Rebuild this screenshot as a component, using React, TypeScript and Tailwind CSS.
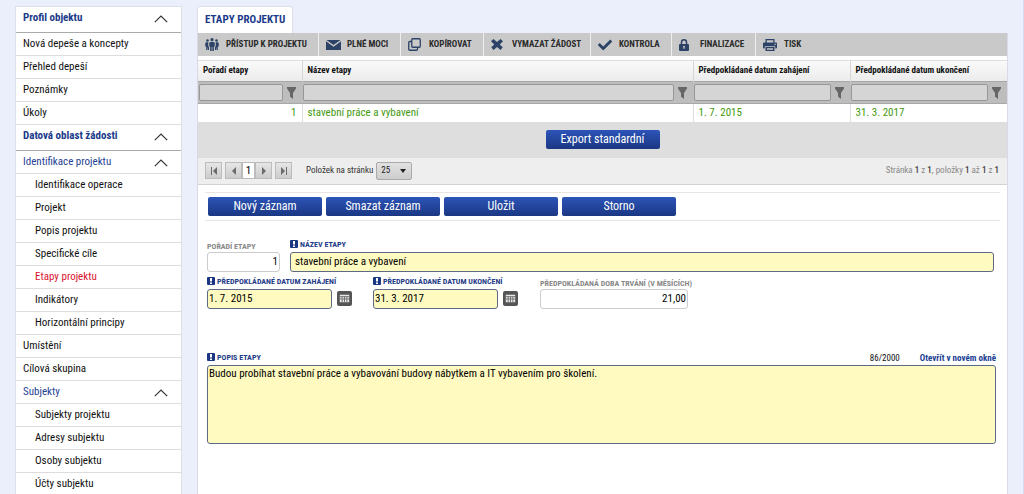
import React, { useState } from 'react';
import clsx from 'clsx';
import { FaCheck } from 'react-icons/fa';

type NavKind = 'section' | 'group' | 'item' | 'sub';

interface NavEntry {
  label: string;
  kind: NavKind;
  active?: boolean;
}

const NAV: NavEntry[] = [
  { label: 'Profil objektu', kind: 'section' },
  { label: 'Nová depeše a koncepty', kind: 'item' },
  { label: 'Přehled depeší', kind: 'item' },
  { label: 'Poznámky', kind: 'item' },
  { label: 'Úkoly', kind: 'item' },
  { label: 'Datová oblast žádosti', kind: 'section' },
  { label: 'Identifikace projektu', kind: 'group' },
  { label: 'Identifikace operace', kind: 'sub' },
  { label: 'Projekt', kind: 'sub' },
  { label: 'Popis projektu', kind: 'sub' },
  { label: 'Specifické cíle', kind: 'sub' },
  { label: 'Etapy projektu', kind: 'sub', active: true },
  { label: 'Indikátory', kind: 'sub' },
  { label: 'Horizontální principy', kind: 'sub' },
  { label: 'Umístění', kind: 'item' },
  { label: 'Cílová skupina', kind: 'item' },
  { label: 'Subjekty', kind: 'group' },
  { label: 'Subjekty projektu', kind: 'sub' },
  { label: 'Adresy subjektu', kind: 'sub' },
  { label: 'Osoby subjektu', kind: 'sub' },
  { label: 'Účty subjektu', kind: 'sub' },
];

function PeopleIcon() {
  return (
    <svg viewBox="0 0 28 26" className="h-[13px] w-[14px]" fill="currentColor">
      <circle cx="14" cy="3.4" r="3.2" />
      <circle cx="5" cy="5" r="2.6" />
      <circle cx="23" cy="5" r="2.6" />
      <path d="M10 8h8l1.500 2v7h-1.800V26h-3v-8h-1.400v8h-3v-9H8.500v-7z" />
      <path d="M2 8.500h4.500v8.500h1.500v7H5.600v-5H4.800v5H2.400v-7H.5V10z" />
      <path d="M26 8.500h-4.500v8.500H20v7h2.400v-5h.8v5h2.400v-7h1.900V10z" />
    </svg>
  );
}

function MailIcon() {
  return (
    <svg viewBox="0 0 30 20" className="h-[10px] w-[15px]" fill="currentColor">
      <path d="M1 0h28L15 10z" />
      <path d="M0 2.500 15 13.500 30 2.500V20H0z" />
    </svg>
  );
}

function CopyIcon() {
  return (
    <svg viewBox="0 0 26 26" className="h-[13px] w-[13px]" fill="none" stroke="currentColor" strokeWidth="2.6" strokeLinejoin="round">
      <rect x="7.500" y="1.500" width="17" height="17" rx="2" />
      <path d="M7.500 7H3.500a2 2 0 0 0-2 2v13.500a2 2 0 0 0 2 2H17a2 2 0 0 0 2-2v-4" />
    </svg>
  );
}

function CrossIcon() {
  return (
    <svg viewBox="0 0 24 22" className="h-[11px] w-[12px]" fill="currentColor">
      <path d="M0 4.500 5 0l7 6 7-6 5 4.500L17.500 11l6 5.500L19 22l-7-6-7 6-4.500-5.500 6-5.500z" />
    </svg>
  );
}

function LockIcon() {
  return (
    <svg viewBox="0 0 20 24" className="h-[12px] w-[10px]" fill="currentColor">
      <path d="M5 11V6.500a5 5 0 0 1 10 0V11" fill="none" stroke="currentColor" strokeWidth="3" />
      <path
        fillRule="evenodd"
        d="M2 10h16a2 2 0 0 1 2 2v10a2 2 0 0 1-2 2H2a2 2 0 0 1-2-2V12a2 2 0 0 1 2-2zm8 3.500a2 2 0 0 0-1 3.700V20h2v-2.800a2 2 0 0 0-1-3.700z"
      />
    </svg>
  );
}

function PrinterIcon() {
  return (
    <svg viewBox="0 0 28 24" className="h-[12px] w-[14px]" fill="currentColor">
      <path fillRule="evenodd" d="M5 0h18v8h-2.500V2.500h-13V8H5z" />
      <path
        fillRule="evenodd"
        d="M2 7h24a2 2 0 0 1 2 2v8a2 2 0 0 1-2 2h-1.500v-4.500h-21V19H2a2 2 0 0 1-2-2V9a2 2 0 0 1 2-2zm21 2.500V12h2.500V9.500z"
      />
      <path fillRule="evenodd" d="M5 16h18v8H5zm3 2.300v3.400h12v-3.400z" />
    </svg>
  );
}

function FunnelIcon() {
  return (
    <svg viewBox="0 0 9 12" className="h-[12px] w-[9px] shrink-0" fill="#666">
      <path d="M0 0h9v1.500L6 6v6L3 9.500V6L0 1.500z" />
    </svg>
  );
}

function CalendarIcon() {
  return (
    <svg viewBox="0 0 16 16" className="h-full w-full">
      <path d="M3 4h10v8H3z" fill="#e8e8e8" />
      <path d="M3 6h10M3 8.500h10M5.500 6v6M8 6v6M10.500 6v6" stroke="#555" strokeWidth=".8" />
    </svg>
  );
}

const TOOLS = [
  { label: 'Přístup k projektu', icon: <PeopleIcon />, width: 'w-[121px]' },
  { label: 'Plné moci', icon: <MailIcon />, width: 'w-[82px]' },
  { label: 'Kopírovat', icon: <CopyIcon />, width: 'w-[83px]' },
  { label: 'Vymazat žádost', icon: <CrossIcon />, width: 'w-[107px]' },
  { label: 'Kontrola', icon: <FaCheck className="h-[14px] w-[14px]" />, width: 'w-[81px]' },
  { label: 'Finalizace', icon: <LockIcon />, width: 'w-[84px]' },
  { label: 'Tisk', icon: <PrinterIcon />, width: 'w-[60px]' },
];

const COLUMNS = [
  { title: 'Pořadí etapy', value: '1', width: 'w-[104px]', right: true },
  { title: 'Název etapy', value: 'stavební práce a vybavení', width: '' },
  { title: 'Předpokládané datum zahájení', value: '1. 7. 2015', width: 'w-[157px]' },
  { title: 'Předpokládané datum ukončení', value: '31. 3. 2017', width: 'w-[157px]' },
];

function Sidebar() {
  return (
    <nav className="w-[167px] shrink-0 self-start border border-[#dcdfe8] bg-white">
      <ul>
        {NAV.map(({ label, kind, active }) => (
          <li
            key={label}
            className={clsx(
              'border-b',
              kind === 'section' ? 'h-[26px] border-[#aaaaaa] pb-[3px]' : 'h-[23px] border-[#dddddd]',
            )}
          >
            <a
              href="#"
              className={clsx(
                'flex h-full items-center justify-between pr-[13px] pt-px',
                kind === 'sub' ? 'pl-[19px]' : 'pl-[7px]',
                kind === 'section' && 'font-bold text-[#1b3a8a]',
                kind === 'group' && 'text-[#1f4396]',
                active && 'text-[#d9142f]',
              )}
            >
              {label}
              {(kind === 'section' || kind === 'group') && (
                <svg viewBox="0 0 14 8" className="h-[8px] w-[14px]" fill="none" stroke="#333" strokeWidth="1.200">
                  <path d="M.8 7.200 7 1l6.200 6.200" />
                </svg>
              )}
            </a>
          </li>
        ))}
      </ul>
    </nav>
  );
}

function Toolbar() {
  return (
    <div className="flex h-[23px] bg-[#c9c9c9]">
      {TOOLS.map(({ label, icon, width }, i) => (
        <button
          key={label}
          className={clsx(
            'flex h-full items-center whitespace-nowrap pl-[7px] text-[9px] font-bold uppercase text-[#2b2b2b]',
            i < TOOLS.length - 1 && 'border-r border-[#eeeeee]',
            width,
          )}
        >
          <span className="flex w-[21px] shrink-0 text-[#2c4266]">{icon}</span>
          {label}
        </button>
      ))}
    </div>
  );
}

function StageGrid() {
  return (
    <table className="mt-[4px] w-full table-fixed border-collapse border-t border-[#dddddd]">
      <thead>
        <tr className="h-[21px] bg-linear-to-b from-[#fafafa] to-[#ebebeb]">
          {COLUMNS.map(({ title, width }) => (
            <th
              key={title}
              className={clsx('border-r border-[#d5d5d5] px-[5px] py-0 text-left text-[9px] font-bold last:border-r-0', width)}
            >
              {title}
            </th>
          ))}
        </tr>
        <tr className="h-[22px] bg-[#bdbdbd]">
          {COLUMNS.map(({ title }) => (
            <td key={title} className="border-y border-[#a8a8a8] p-0">
              <div className="flex items-center gap-[4px] pl-[1px] pr-[6px]">
                <input
                  aria-label={`Filtr: ${title}`}
                  className="h-[17px] min-w-0 flex-1 rounded-[2px] border border-[#979797] bg-[#d5d5d5] px-1"
                />
                <FunnelIcon />
              </div>
            </td>
          ))}
        </tr>
      </thead>
      <tbody>
        <tr className="h-[18px] text-[#43990f]">
          {COLUMNS.map(({ title, value, right }) => (
            <td
              key={title}
              className={clsx('border-r border-[#dddddd] px-[5px] py-0 leading-[17px] last:border-r-0', right && 'text-right')}
            >
              {value}
            </td>
          ))}
        </tr>
      </tbody>
    </table>
  );
}

function BlueButton({ children }: { children: React.ReactNode }) {
  return (
    <button className="h-[19px] w-[114px] rounded-[2px] bg-linear-to-b from-[#2c55b8] to-[#1b3784] text-[12px] leading-[19px] text-white">
      {children}
    </button>
  );
}

function PagerButton({ label, path }: { label: string; path: string }) {
  return (
    <button
      aria-label={label}
      className="flex h-[17px] w-[17px] items-center justify-center border border-[#bcbcbc] bg-linear-to-b from-[#e6e6e6] to-[#cccccc]"
    >
      <svg viewBox="0 0 8 8" className="h-[8px] w-[8px]" fill="#6b6b6b">
        <path d={path} />
      </svg>
    </button>
  );
}

function Pager() {
  return (
    <div className="flex h-[27px] items-center border-b border-[#d2d2d2] bg-[#eeeeee] pl-[7px] pr-[8px] text-[9px] text-[#333333]">
      <PagerButton label="První stránka" path="M1 0h1v8H1zM7 0v8L3 4z" />
      <div className="mx-[3px] flex">
        <PagerButton label="Předchozí stránka" path="M6 0v8L2 4z" />
        <button className="h-[17px] w-[13px] border border-[#bcbcbc] bg-white text-[11px] leading-[15px] text-black">1</button>
        <PagerButton label="Další stránka" path="M2 0v8l4-4z" />
      </div>
      <PagerButton label="Poslední stránka" path="M6 0h1v8H6zM1 0v8l4-4z" />
      <label htmlFor="page-size" className="ml-[14px] mr-[3px]">
        Položek na stránku
      </label>
      <div className="grid items-center">
        <select
          id="page-size"
          defaultValue="25"
          className="col-start-1 row-start-1 h-[18px] w-[36px] appearance-none rounded-[2px] border border-[#aaaaaa] bg-linear-to-b from-[#e2e2e2] to-[#cccccc] pl-[4px] text-[9px] text-[#222222]"
        >
          <option>25</option>
          <option>50</option>
        </select>
        <svg viewBox="0 0 6 4" className="pointer-events-none col-start-1 row-start-1 mr-[6px] h-[4px] w-[6px] justify-self-end" fill="#222">
          <path d="M0 0h6L3 4z" />
        </svg>
      </div>
      <p className="ml-auto text-[#888888]">
        Stránka <b className="font-medium text-[#444444]">1</b> z <b className="font-medium text-[#444444]">1</b>, položky{' '}
        <b className="font-medium text-[#444444]">1</b> až <b className="font-medium text-[#444444]">1</b> z{' '}
        <b className="font-medium text-[#444444]">1</b>
      </p>
    </div>
  );
}

interface FieldProps {
  id: string;
  label: string;
  value: string;
  required?: boolean;
  calendar?: boolean;
  className?: string;
}

function FieldLabel({ id, label, required }: { id: string; label: string; required?: boolean }) {
  return (
    <label
      htmlFor={id}
      className={clsx(
        'flex h-[13px] items-center gap-[2px] whitespace-nowrap text-[8px] font-bold uppercase leading-[11px]',
        required ? 'pb-[2px] text-[#1f3c88]' : 'pt-[2px] text-[#888888]',
      )}
    >
      {required && (
        <svg viewBox="0 0 8 8" className="h-[8px] w-[8px]">
          <rect width="8" height="8" rx="1" fill="#1b3784" />
          <path d="M3 1h2v3.500H3zM3 5.500h2V7H3z" fill="#fff" />
        </svg>
      )}
      {label}
    </label>
  );
}

function Field({ id, label, value, required, calendar, className }: FieldProps) {
  const [text, setText] = useState(value);
  return (
    <div className={className}>
      <FieldLabel id={id} label={label} required={required} />
      <div className="flex items-center gap-[5px]">
        <input
          id={id}
          value={text}
          onChange={(e) => setText(e.target.value)}
          className={clsx(
            'h-[20px] min-w-0 flex-1 rounded-[3px] border text-[11px] text-black',
            required ? 'border-[#5c6a85] bg-[#fffac0]' : 'border-[#cccccc] bg-white text-right',
            required && !calendar ? 'px-[4px]' : 'px-[1px]',
          )}
        />
        {calendar && (
          <button aria-label={`Vybrat: ${label}`} className="h-[15px] w-[15px] rounded-[2px] bg-[#555555]">
            <CalendarIcon />
          </button>
        )}
      </div>
    </div>
  );
}

function StageForm() {
  const [note, setNote] = useState(
    'Budou probíhat stavební práce a vybavování budovy nábytkem a IT vybavením pro školení.',
  );
  return (
    <form className="px-[7px] pb-[50px] pt-[7px]" onSubmit={(e) => e.preventDefault()}>
      <div className="flex gap-[4px] border-y border-[#e8e5e2] px-[3px] py-[4px]">
        <BlueButton>Nový záznam</BlueButton>
        <BlueButton>Smazat záznam</BlueButton>
        <BlueButton>Uložit</BlueButton>
        <BlueButton>Storno</BlueButton>
      </div>
      <div className="mt-[18px] flex gap-[10px] pl-[2px] pr-[6px]">
        <Field id="order" label="Pořadí etapy" value="1" className="w-[73px]" />
        <Field id="name" label="Název etapy" value="stavební práce a vybavení" required className="flex-1" />
      </div>
      <div className="mt-[4px] flex pl-[2px]">
        <Field id="start" label="Předpokládané datum zahájení" value="1. 7. 2015" required calendar className="mr-[21px] w-[145px]" />
        <Field id="end" label="Předpokládané datum ukončení" value="31. 3. 2017" required calendar className="mr-[22px] w-[145px]" />
        <Field id="duration" label="Předpokládaná doba trvání (v měsících)" value="21,00" className="w-[148px]" />
      </div>
      <div className="mt-[43px] pl-[2px] pr-[4px]">
        <div className="flex text-[9px] leading-[12px]">
          <FieldLabel id="note" label="Popis etapy" required />
          <span className="ml-auto mr-[20px]">{note.length}/2000</span>
          <a href="#" className="font-bold text-[#1b3f94]">
            Otevřít v novém okně
          </a>
        </div>
        <textarea
          id="note"
          value={note}
          onChange={(e) => setNote(e.target.value)}
          className="block h-[79px] w-full resize-none rounded-[3px] border border-[#5c6a85] bg-[#fffac0] px-[1px] text-[11px] leading-[16px] text-black"
        />
      </div>
    </form>
  );
}

export default function App() {
  return (
    <div className="flex h-screen gap-[15px] overflow-hidden border-r border-[#d8daf0] bg-[#ebeffc] pl-[15px] pr-[15px] pt-[6px] font-['Roboto_Condensed','Liberation_Sans_Narrow',Roboto,sans-serif] text-[11px] text-[#111111]">
      <Sidebar />
      <div className="flex min-w-0 flex-1 flex-col">
        <h1 className="flex h-[27px] shrink-0 items-center self-start rounded-t-[3px] border border-b-0 border-[#dcdfe8] bg-white px-[7px] font-bold uppercase text-[#1b3a8a]">
          Etapy projektu
        </h1>
        <main className="flex-1 border-x border-[#d8dae6] bg-white">
          <Toolbar />
          <StageGrid />
          <div className="flex h-[36px] items-center justify-center bg-[#dedede]">
            <BlueButton>Export standardní</BlueButton>
          </div>
          <Pager />
          <StageForm />
        </main>
      </div>
    </div>
  );
}
